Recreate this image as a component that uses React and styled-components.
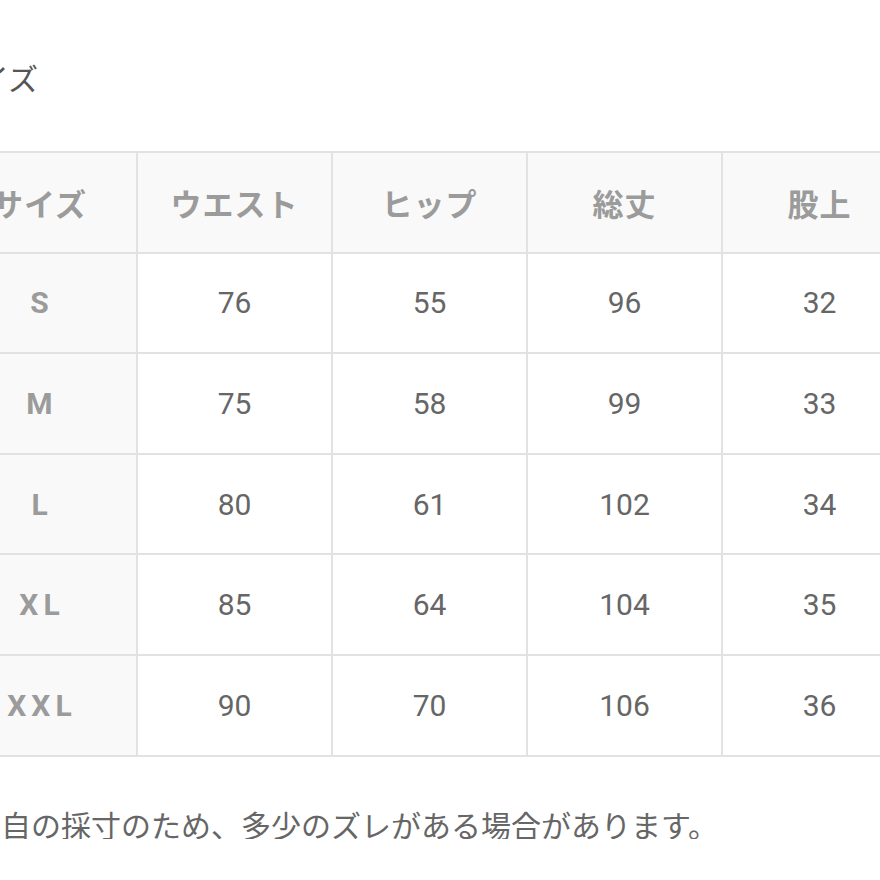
import React from 'react'
import styled, {createGlobalStyle} from 'styled-components'

const GlobalStyle = createGlobalStyle`
  html, body{
    margin: 0;
    padding: 0;
    background: #fff;
    overflow: hidden;
  }
  body{
    font-family: Roboto, "Noto Sans CJK JP", "Noto Sans", sans-serif;
  }
`

const columns = ['サイズ', 'ウエスト', 'ヒップ', '総丈', '股上']

const rows = [
  {size: 'S', values: [76, 55, 96, 32]},
  {size: 'M', values: [75, 58, 99, 33]},
  {size: 'L', values: [80, 61, 102, 34]},
  {size: 'XL', values: [85, 64, 104, 35]},
  {size: 'XXL', values: [90, 70, 106, 36]}
]

const App = () => {
  return (
    <Page>
      <GlobalStyle/>
      <Title>サイズ</Title>
      <SizeTable>
        <colgroup>
          {columns.map(col => <col key={col}/>)}
        </colgroup>
        <thead>
          <tr>
            {columns.map(col => (
              <HeadCell key={col}>{col}</HeadCell>
            ))}
          </tr>
        </thead>
        <tbody>
          {rows.map(row => (
            <tr key={row.size}>
              <SizeCell>{row.size}</SizeCell>
              {row.values.map((v, i) => (
                <ValueCell key={i}>{v}</ValueCell>
              ))}
            </tr>
          ))}
        </tbody>
      </SizeTable>
      <Note>独自の採寸のため、多少のズレがある場合があります。</Note>
    </Page>
  )
}

export default App

const Page = styled.main`
  width: 1000px;
  margin-left: -59px;
  padding-top: 62px;
`

const Title = styled.h2`
  margin: 0 0 60px;
  padding-left: 8px;
  font-family: "Noto Sans CJK JP", sans-serif;
  font-size: 30px;
  line-height: 30px;
  font-weight: 400;
  color: #555;
`

const SizeTable = styled.table`
  border-collapse: collapse;
  table-layout: fixed;
  width: 977px;
  margin-top: -1px;

  col{
    width: 20%;
  }

  th, td{
    height: 100.6px;
    box-sizing: border-box;
    border: 2px solid #e2e2e2;
    text-align: center;
    vertical-align: middle;
    padding: 0;
  }
`

const HeadCell = styled.th`
  background: #f9f9f9;
  font-family: "Noto Sans CJK JP", sans-serif;
  font-size: 31px;
  font-weight: 700;
  letter-spacing: 1px;
  color: #9b9b9b;
`

const SizeCell = styled.td`
  background: #f9f9f9;
  font-size: 30px;
  font-weight: 700;
  letter-spacing: 5px;
  text-indent: 5px;
  color: #9b9b9b;
`

const ValueCell = styled.td`
  background: #fff;
  font-size: 30px;
  font-weight: 400;
  color: #666;
`

const Note = styled.p`
  margin: 52px 0 0;
  padding-left: 30px;
  font-family: "Noto Sans CJK JP", sans-serif;
  font-size: 30px;
  line-height: 30px;
  font-weight: 400;
  color: #666;
`
